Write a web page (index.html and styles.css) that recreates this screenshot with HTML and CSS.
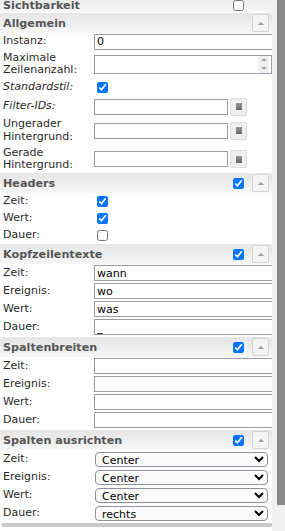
FILE: index.html
```html
<!DOCTYPE html>
<html>
<head>
<meta charset="utf-8">
<link rel="stylesheet" href="styles.css">
</head>
<body>
<div class="screen">
  <div class="pane">
    <div class="content">
      <div class="hdr hdr-first"><span class="ht">Sichtbarkeit</span><input type="checkbox" class="hcb hcb-solo"></div>

      <div class="hdr"><span class="ht">Allgemein</span><button class="tog"><span class="tri"></span></button></div>
      <div class="row h17"><span class="lbl">Instanz:</span><input class="txt" value="0"></div>
      <div class="row h28"><span class="lbl">Maximale Zeilenanzahl:</span>
        <div class="num"><input class="numin" value=""><span class="spin"><i class="up"></i><i class="dn"></i></span></div>
      </div>
      <div class="row h19"><span class="lbl it">Standardstil:</span><input type="checkbox" class="cb" checked></div>
      <div class="row h19"><span class="lbl it">Filter-IDs:</span><input class="txt short" value=""><span class="cbtn"><i></i></span></div>
      <div class="row h29"><span class="lbl">Ungerader Hintergrund:</span><input class="txt short" value=""><span class="cbtn"><i></i></span></div>
      <div class="row h28"><span class="lbl">Gerade Hintergrund:</span><input class="txt short" value=""><span class="cbtn"><i></i></span></div>

      <div class="hdr hdr-tight"><span class="ht">Headers</span><input type="checkbox" class="hcb" checked><button class="tog"><span class="tri"></span></button></div>
      <div class="row h17"><span class="lbl">Zeit:</span><input type="checkbox" class="cb" checked></div>
      <div class="row h17"><span class="lbl">Wert:</span><input type="checkbox" class="cb" checked></div>
      <div class="row h17"><span class="lbl">Dauer:</span><input type="checkbox" class="cb"></div>

      <div class="hdr hdr-tight"><span class="ht">Kopfzeilentexte</span><input type="checkbox" class="hcb" checked><button class="tog"><span class="tri"></span></button></div>
      <div class="row h18"><span class="lbl">Zeit:</span><input class="txt" value="wann"></div>
      <div class="row h18"><span class="lbl">Ereignis:</span><input class="txt" value="wo"></div>
      <div class="row h18"><span class="lbl">Wert:</span><input class="txt" value="was"></div>
      <div class="row h18"><span class="lbl">Dauer:</span><input class="txt" value="_"></div>

      <div class="hdr"><span class="ht">Spaltenbreiten</span><input type="checkbox" class="hcb" checked><button class="tog"><span class="tri"></span></button></div>
      <div class="row h18"><span class="lbl">Zeit:</span><input class="txt" value=""></div>
      <div class="row h18"><span class="lbl">Ereignis:</span><input class="txt" value=""></div>
      <div class="row h18"><span class="lbl">Wert:</span><input class="txt" value=""></div>
      <div class="row h18"><span class="lbl">Dauer:</span><input class="txt" value=""></div>

      <div class="hdr"><span class="ht">Spalten ausrichten</span><input type="checkbox" class="hcb" checked><button class="tog"><span class="tri"></span></button></div>
      <div class="row h18"><span class="lbl">Zeit:</span><select class="sel"><option>Center</option></select></div>
      <div class="row h18"><span class="lbl">Ereignis:</span><select class="sel"><option>Center</option></select></div>
      <div class="row h18"><span class="lbl">Wert:</span><select class="sel"><option>Center</option></select></div>
      <div class="row h18"><span class="lbl">Dauer:</span><select class="sel"><option>rechts</option></select></div>

      <div class="hscroll"><div class="hthumb"></div></div>
    </div>
  </div>
  <div class="vscroll"><div class="vthumb"></div></div>
</div>
</body>
</html>
```

FILE: styles.css
```css
* { box-sizing: border-box; }
html, body { margin: 0; padding: 0; }
body {
  width: 285px;
  height: 531px;
  overflow: hidden;
  background: #fff;
  font-family: "DejaVu Sans", Verdana, sans-serif;
  font-size: 11px;
  color: #2a2a2a;
}
.screen { display: flex; height: 531px; }
.pane { width: 272px; flex: none; overflow: hidden; }
.content { margin-top: -8px; }

.vscroll { width: 13px; flex: none; background: #f0f0f0; display: flex; justify-content: flex-end; }
.vthumb { width: 8px; height: 505px; background: #8a8a8a; }

.hdr {
  height: 20px;
  margin-top: 1px;
  display: flex;
  align-items: center;
  padding-left: 3px;
  background: linear-gradient(#e5e5e5, #f6f6f6);
}
.hdr-first { margin-top: 0; padding-top: 6px; }
.hdr-tight { margin-top: 0; }
.ht { flex: 1; font-weight: bold; font-size: 11.2px; color: #555; white-space: nowrap; }
.hcb { width: 11px; height: 11px; margin: 0 8px 0 0; flex: none; }
.hcb-solo { margin-right: 28px; }
.tog {
  width: 17px;
  height: 18px;
  margin: 0 3px 0 0;
  padding: 0;
  flex: none;
  border: 1px solid #d4d4d4;
  border-radius: 2px;
  background: #f4f4f4;
  display: flex;
  align-items: center;
  justify-content: center;
}
.tri {
  width: 0; height: 0;
  border-left: 3px solid transparent;
  border-right: 3px solid transparent;
  border-bottom: 3px solid #9a9a9a;
}

.row { display: flex; align-items: center; padding-left: 3px; }
.h17 { height: 17px; }
.h18 { height: 18px; }
.h19 { height: 19px; }
.h28 { height: 28px; }
.h29 { height: 29px; }
.lbl { width: 91px; flex: none; line-height: 12.5px; color: #2a2a2a; }
.it { font-style: italic; }

.txt {
  width: 190px;
  height: 16px;
  flex: none;
  margin: 0;
  border: 1px solid #9a9aa8;
  padding: 0 2px;
  font-family: "DejaVu Sans", Verdana, sans-serif;
  font-size: 11px;
  color: #000;
  background: #fff;
  outline: none;
}
.txt.short { width: 134px; }

.cbtn {
  width: 17px;
  height: 18px;
  margin-left: 2px;
  flex: none;
  border: 1px solid #dcdcdc;
  border-radius: 2px;
  background: #efefef;
  display: flex;
  align-items: center;
  justify-content: center;
}
.cbtn i { display: block; width: 6px; height: 7px; background: linear-gradient(#9a9a9a, #666); }

.num {
  width: 178px;
  height: 19px;
  flex: none;
  border: 1px solid #9a9aa8;
  display: flex;
  align-items: center;
  background: #fff;
}
.numin { flex: 1; min-width: 0; height: 100%; border: 0; padding: 0 2px; font: inherit; outline: none; background: transparent; }
.spin {
  width: 11px;
  height: 17px;
  margin-right: 2px;
  flex: none;
  display: flex;
  flex-direction: column;
  background: #efefef;
}
.spin i { flex: 1; display: flex; align-items: center; justify-content: center; }
.spin .up::before { content: ""; border-left: 3px solid transparent; border-right: 3px solid transparent; border-bottom: 3px solid #a8a8a8; }
.spin .dn::before { content: ""; border-left: 3px solid transparent; border-right: 3px solid transparent; border-top: 3px solid #a8a8a8; }

.cb { width: 11px; height: 11px; margin: 0 0 0 3px; flex: none; }

.sel {
  width: 173px;
  height: 15px;
  flex: none;
  margin: 0 0 0 1px;
  padding: 0 2px;
  font-family: "DejaVu Sans", Verdana, sans-serif;
  font-size: 11px;
  color: #000;
  border: 1px solid #8f8f9d;
  border-radius: 4px;
  background: #fbfbfb;
}

.hscroll { height: 8px; padding: 1px 0 3px 2px; background: #fff; }
.hthumb { height: 4px; width: 270px; background: #c8c8c8; }
```
